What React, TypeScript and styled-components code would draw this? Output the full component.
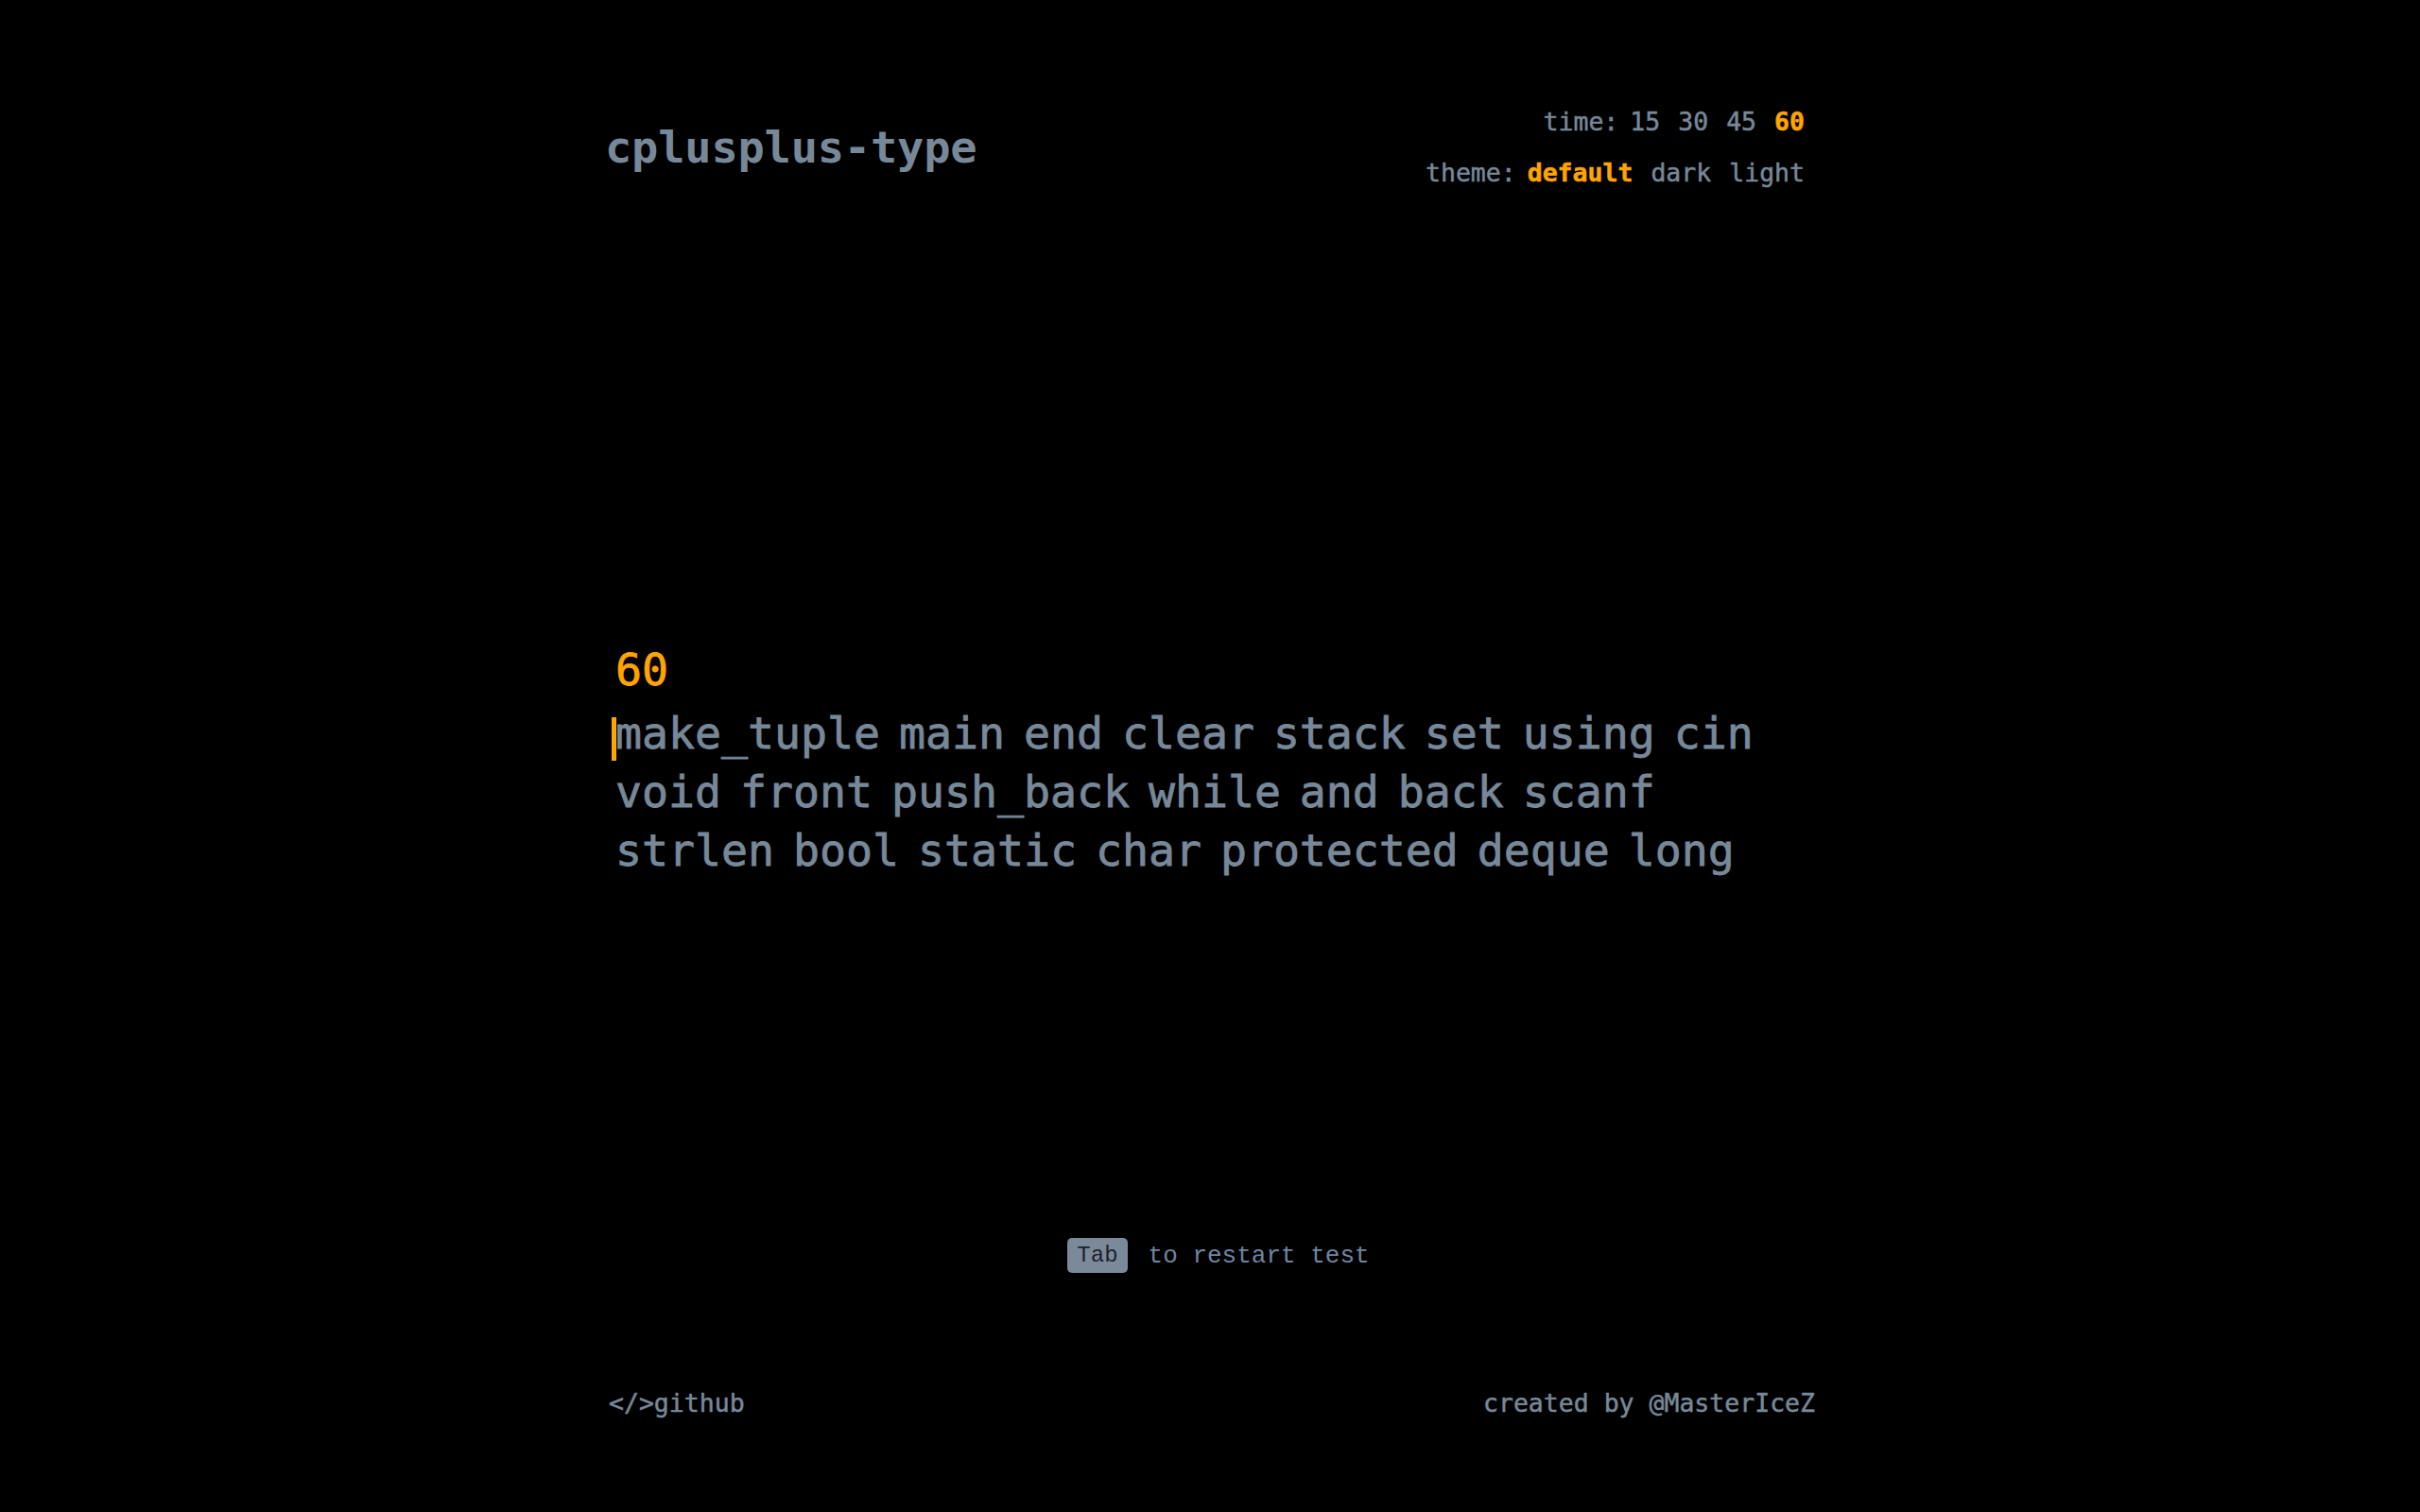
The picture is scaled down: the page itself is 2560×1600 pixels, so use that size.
import React from "react";
import styled, { createGlobalStyle } from "styled-components";

const GlobalStyle = createGlobalStyle`
  html, body {
    margin: 0;
    padding: 0;
    background: #000000;
  }
  body {
    font-family: "DejaVu Sans Mono", "Liberation Mono", monospace;
    color: #778899;
  }
`;

const ACCENT = "#ffa500";
const MUTED = "#778899";

const Page = styled.div`
  width: 1280px;
  margin: 0 auto;
  padding: 109px 0 90px;
  display: flex;
  flex-direction: column;
  box-sizing: border-box;
`;

const Header = styled.header`
  display: flex;
  justify-content: space-between;
  align-items: center;
`;

const Title = styled.h1`
  margin: 0;
  font-size: 47px;
  line-height: 60px;
  font-weight: 700;
  color: ${MUTED};
  letter-spacing: -0.2px;
`;

const Settings = styled.div`
  display: flex;
  flex-direction: column;
  align-items: flex-end;
  gap: 14px;
  padding-right: 11px;
`;

const SettingRow = styled.div`
  display: flex;
  align-items: center;
  font-size: 26.5px;
  line-height: 40px;
  -webkit-text-stroke: 0.5px currentColor;
`;

const SettingLabel = styled.span`
  color: ${MUTED};
  margin-right: 12px;
`;

const Options = styled.div`
  display: flex;
  gap: 19px;
`;

const Option = styled.span<{ $active?: boolean }>`
  color: ${(p) => (p.$active ? ACCENT : MUTED)};
  font-weight: ${(p) => (p.$active ? 700 : 400)};
  cursor: pointer;
`;

const TestArea = styled.main`
  margin-top: 475px;
  padding-left: 11px;
  display: flex;
  flex-direction: column;
`;

const Timer = styled.div`
  font-size: 46.5px;
  line-height: 62px;
  color: ${ACCENT};
  margin-bottom: 5px;
  -webkit-text-stroke: 0.8px currentColor;
`;

const Words = styled.div`
  display: flex;
  flex-direction: column;
  font-size: 46.5px;
  line-height: 62px;
  word-spacing: -8px;
  color: ${MUTED};
  white-space: pre;
  -webkit-text-stroke: 0.8px currentColor;
`;

const Line = styled.div`
  position: relative;
`;

const Caret = styled.span`
  position: absolute;
  left: -4px;
  top: 14px;
  width: 5px;
  height: 46px;
  background: ${ACCENT};
`;

const Hint = styled.div`
  margin-top: 379px;
  display: flex;
  justify-content: center;
  align-items: center;
  gap: 22px;
  padding-left: 18px;
  font-family: "Liberation Mono", "Courier New", monospace;
`;

const Kbd = styled.kbd`
  font-family: "Liberation Mono", "Courier New", monospace;
  font-size: 24px;
  line-height: 27px;
  padding: 5px 10px;
  border-radius: 5px;
  background: #7a8a9b;
  color: #1f1f2b;
`;

const HintText = styled.span`
  font-size: 26px;
  color: #6f86a0;
`;

const Footer = styled.footer`
  margin-top: 118px;
  padding-left: 4px;
  display: flex;
  justify-content: space-between;
  align-items: center;
  font-size: 26.5px;
  line-height: 40px;
  -webkit-text-stroke: 0.5px currentColor;
`;

const FooterLink = styled.a`
  color: ${MUTED};
  text-decoration: none;
  cursor: pointer;
`;

const lines = [
  "make_tuple main end clear stack set using cin",
  "void front push_back while and back scanf",
  "strlen bool static char protected deque long",
];

export default function App() {
  return (
    <>
      <GlobalStyle />
      <Page>
        <Header>
          <Title>cplusplus-type</Title>
          <Settings>
            <SettingRow>
              <SettingLabel>time:</SettingLabel>
              <Options>
                {["15", "30", "45", "60"].map((t) => (
                  <Option key={t} $active={t === "60"}>
                    {t}
                  </Option>
                ))}
              </Options>
            </SettingRow>
            <SettingRow>
              <SettingLabel>theme:</SettingLabel>
              <Options>
                {["default", "dark", "light"].map((t) => (
                  <Option key={t} $active={t === "default"}>
                    {t}
                  </Option>
                ))}
              </Options>
            </SettingRow>
          </Settings>
        </Header>

        <TestArea>
          <Timer>60</Timer>
          <Words>
            {lines.map((l, i) => (
              <Line key={i}>
                {i === 0 && <Caret />}
                {l}
              </Line>
            ))}
          </Words>
        </TestArea>

        <Hint>
          <Kbd>Tab</Kbd>
          <HintText>to restart test</HintText>
        </Hint>

        <Footer>
          <FooterLink>&lt;/&gt;github</FooterLink>
          <FooterLink>created by @MasterIceZ</FooterLink>
        </Footer>
      </Page>
    </>
  );
}
